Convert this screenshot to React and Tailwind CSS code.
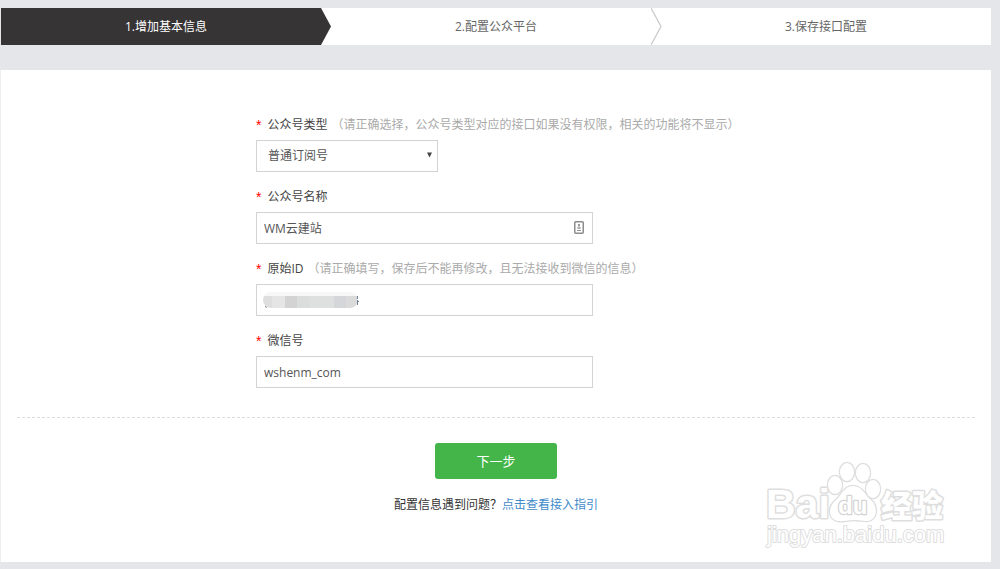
import React from "react";

const fieldBox =
  "h-8 border border-[#d3d3d3] bg-white text-[12px] leading-5 text-[#555] outline-none focus:border-[#44b549]";

function Arrow({ active }) {
  return (
    <svg
      className="absolute top-0 left-full z-10 -ml-2.5 h-full w-3"
      viewBox="0 0 12 37"
      preserveAspectRatio="none"
      aria-hidden="true"
    >
      <path d="M0 0L10 18.5L0 37Z" fill={active ? "#373435" : "#fff"} />
      {!active && <path d="M0 0L10 18.5L0 37" fill="none" stroke="#c8c8c8" strokeWidth="1.2" />}
    </svg>
  );
}

function Steps() {
  const steps = ["1.增加基本信息", "2.配置公众平台", "3.保存接口配置"];
  return (
    <ol className="ml-px flex bg-white text-[12px] leading-[37px]">
      {steps.map((step, i) => (
        <li
          key={step}
          aria-current={i === 0 ? "step" : undefined}
          className={
            i === 0
              ? "relative flex-1 bg-white text-center text-white"
              : "relative flex-1 text-center text-[#666]"
          }
        >
          {i === 0 ? <div className="mr-2.5 bg-[#373435] pl-2.5">{step}</div> : step}
          {i < 2 && <Arrow active={i === 0} />}
        </li>
      ))}
    </ol>
  );
}

function Field({ id, label, hint, children }) {
  return (
    <div className="mb-[15px]">
      <div className="mb-[5px] flex items-center text-[12px] leading-5 whitespace-nowrap">
        <label htmlFor={id} className="flex text-[#444]">
          <span className="mr-1.5 font-['Liberation_Sans',sans-serif] text-[14px] text-[#f00]">*</span>
          {label}
        </label>
        {hint && <span className="ml-1 text-[#aaa]">{hint}</span>}
      </div>
      {children}
    </div>
  );
}

function Mosaic() {
  return (
    <svg
      className="pointer-events-none absolute top-2 left-[7px]"
      width="100"
      height="18"
      viewBox="0 0 100 18"
      aria-hidden="true"
    >
      <defs>
        <clipPath id="smudge">
          <rect x="0" y="0" width="95" height="16" rx="8" />
        </clipPath>
      </defs>
      <path d="M2 14.5q1.5 1.5 3 -0.5" fill="none" stroke="#777" />
      <path d="M94.5 4v3M94.5 8v5M93 9.5h3" fill="none" stroke="#6f7f90" />
      <g clipPath="url(#smudge)">
        <rect width="94" height="5" fill="#f7f7f7" />
        <rect y="4" width="9" height="12" fill="#dededf" />
        <rect x="9" y="4" width="13" height="12" fill="#e5e5e6" />
        <rect x="22" y="4" width="12" height="12" fill="#d3d3d4" />
        <rect x="34" y="4" width="13" height="12" fill="#dbdcdc" />
        <rect x="47" y="4" width="24" height="12" fill="#dedfdf" />
        <rect x="71" y="4" width="12" height="12" fill="#d5d6da" />
        <rect x="83" y="4" width="11" height="12" fill="#dadadb" />
      </g>
    </svg>
  );
}

function Watermark() {
  return (
    <svg
      className="pointer-events-none absolute right-10 bottom-2.5 font-['Liberation_Sans','Noto_Sans_CJK_SC',sans-serif]"
      width="188"
      height="92"
      viewBox="0 0 188 92"
      role="img"
      aria-label="Baidu 经验"
    >
      <g fill="#fff" stroke="#dedede" strokeWidth="3" strokeLinejoin="round" paintOrder="stroke">
        <text x="3" y="58" fontSize="41" fontWeight="700">Bai</text>
        <text x="118" y="57" fontSize="31" fontWeight="900">经验</text>
        <g strokeWidth="2.5">
          <path d="M90 26C99 26 102 35 108 40C115 46 115 60 104 61C99 61 96 60 90 60C84 60 80 62 75 61C65 59 65 47 72 41C79 35 81 26 90 26Z" />
          <ellipse cx="72" cy="25" rx="7" ry="9" />
          <ellipse cx="84" cy="12" rx="7" ry="9" />
          <ellipse cx="100" cy="13" rx="7" ry="9" />
          <ellipse cx="110" cy="29" rx="7" ry="9" />
        </g>
        <text x="75" y="54" fontSize="24" fontWeight="700" strokeWidth="2.5" stroke="#d4d4d4">du</text>
        <text x="4" y="82" fontSize="22" strokeWidth="2">jingyan.baidu.com</text>
      </g>
    </svg>
  );
}

export default function App() {
  return (
    <div
      lang="zh-CN"
      className="min-h-screen bg-[#e5e6ea] pt-2 pr-[9px] pb-[7px] font-['Open_Sans','Noto_Sans_CJK_SC',sans-serif]"
    >
      <Steps />
      <main className="relative mt-[25px] border-l border-[#eee] bg-white px-4 pt-[45px] pb-[47px]">
        <form onSubmit={(e) => e.preventDefault()}>
          <div className="mx-auto w-[480px] max-w-full">
            <Field
              id="type"
              label="公众号类型"
              hint="（请正确选择，公众号类型对应的接口如果没有权限，相关的功能将不显示）"
            >
              <div className="relative w-[182px]">
                <select id="type" className={`${fieldBox} block w-full appearance-none px-[11px]`}>
                  <option>普通订阅号</option>
                </select>
                <svg
                  className="pointer-events-none absolute top-3 right-[5px]"
                  width="7"
                  height="6"
                  viewBox="0 0 7 6"
                  aria-hidden="true"
                >
                  <path d="M1 0.5H6L3.5 5.5Z" fill="#444" />
                </svg>
              </div>
            </Field>
            <Field id="name" label="公众号名称">
              <div className="relative w-[337px]">
                <input id="name" type="text" defaultValue="WM云建站" className={`${fieldBox} block w-full px-[7px]`} />
                <svg
                  className="absolute top-[9px] right-[9px]"
                  width="10"
                  height="13"
                  viewBox="0 0 10 13"
                  aria-hidden="true"
                >
                  <rect x="0.75" y="0.75" width="8.5" height="11.5" rx="1" fill="#fff" stroke="#8c8c8c" strokeWidth="1.5" />
                  <circle cx="5" cy="4" r="1" fill="#777" />
                  <path d="M5 4V8M3 7H7M3 9.5H7" stroke="#999" />
                </svg>
              </div>
            </Field>
            <Field id="origin" label="原始ID" hint="（请正确填写，保存后不能再修改，且无法接收到微信的信息）">
              <div className="relative w-[337px]">
                <input id="origin" type="text" className={`${fieldBox} block w-full px-[7px]`} />
                <Mosaic />
              </div>
            </Field>
            <Field id="wechat" label="微信号">
              <input id="wechat" type="text" defaultValue="wshenm_com" className={`${fieldBox} block w-[337px] px-[7px]`} />
            </Field>
          </div>
          <div className="mt-[29px] border-t border-dashed border-[#ddd] pt-[25px] text-center">
            <button type="submit" className="h-9 w-[122px] rounded-[3px] bg-[#44b549] text-[13px] leading-5 text-white">
              下一步
            </button>
            <p className="mt-4 text-[12px] leading-5 text-[#333]">
              配置信息遇到问题？
              <a href="#guide" className="text-[#428bca]">
                点击查看接入指引
              </a>
            </p>
          </div>
        </form>
        <Watermark />
      </main>
    </div>
  );
}
